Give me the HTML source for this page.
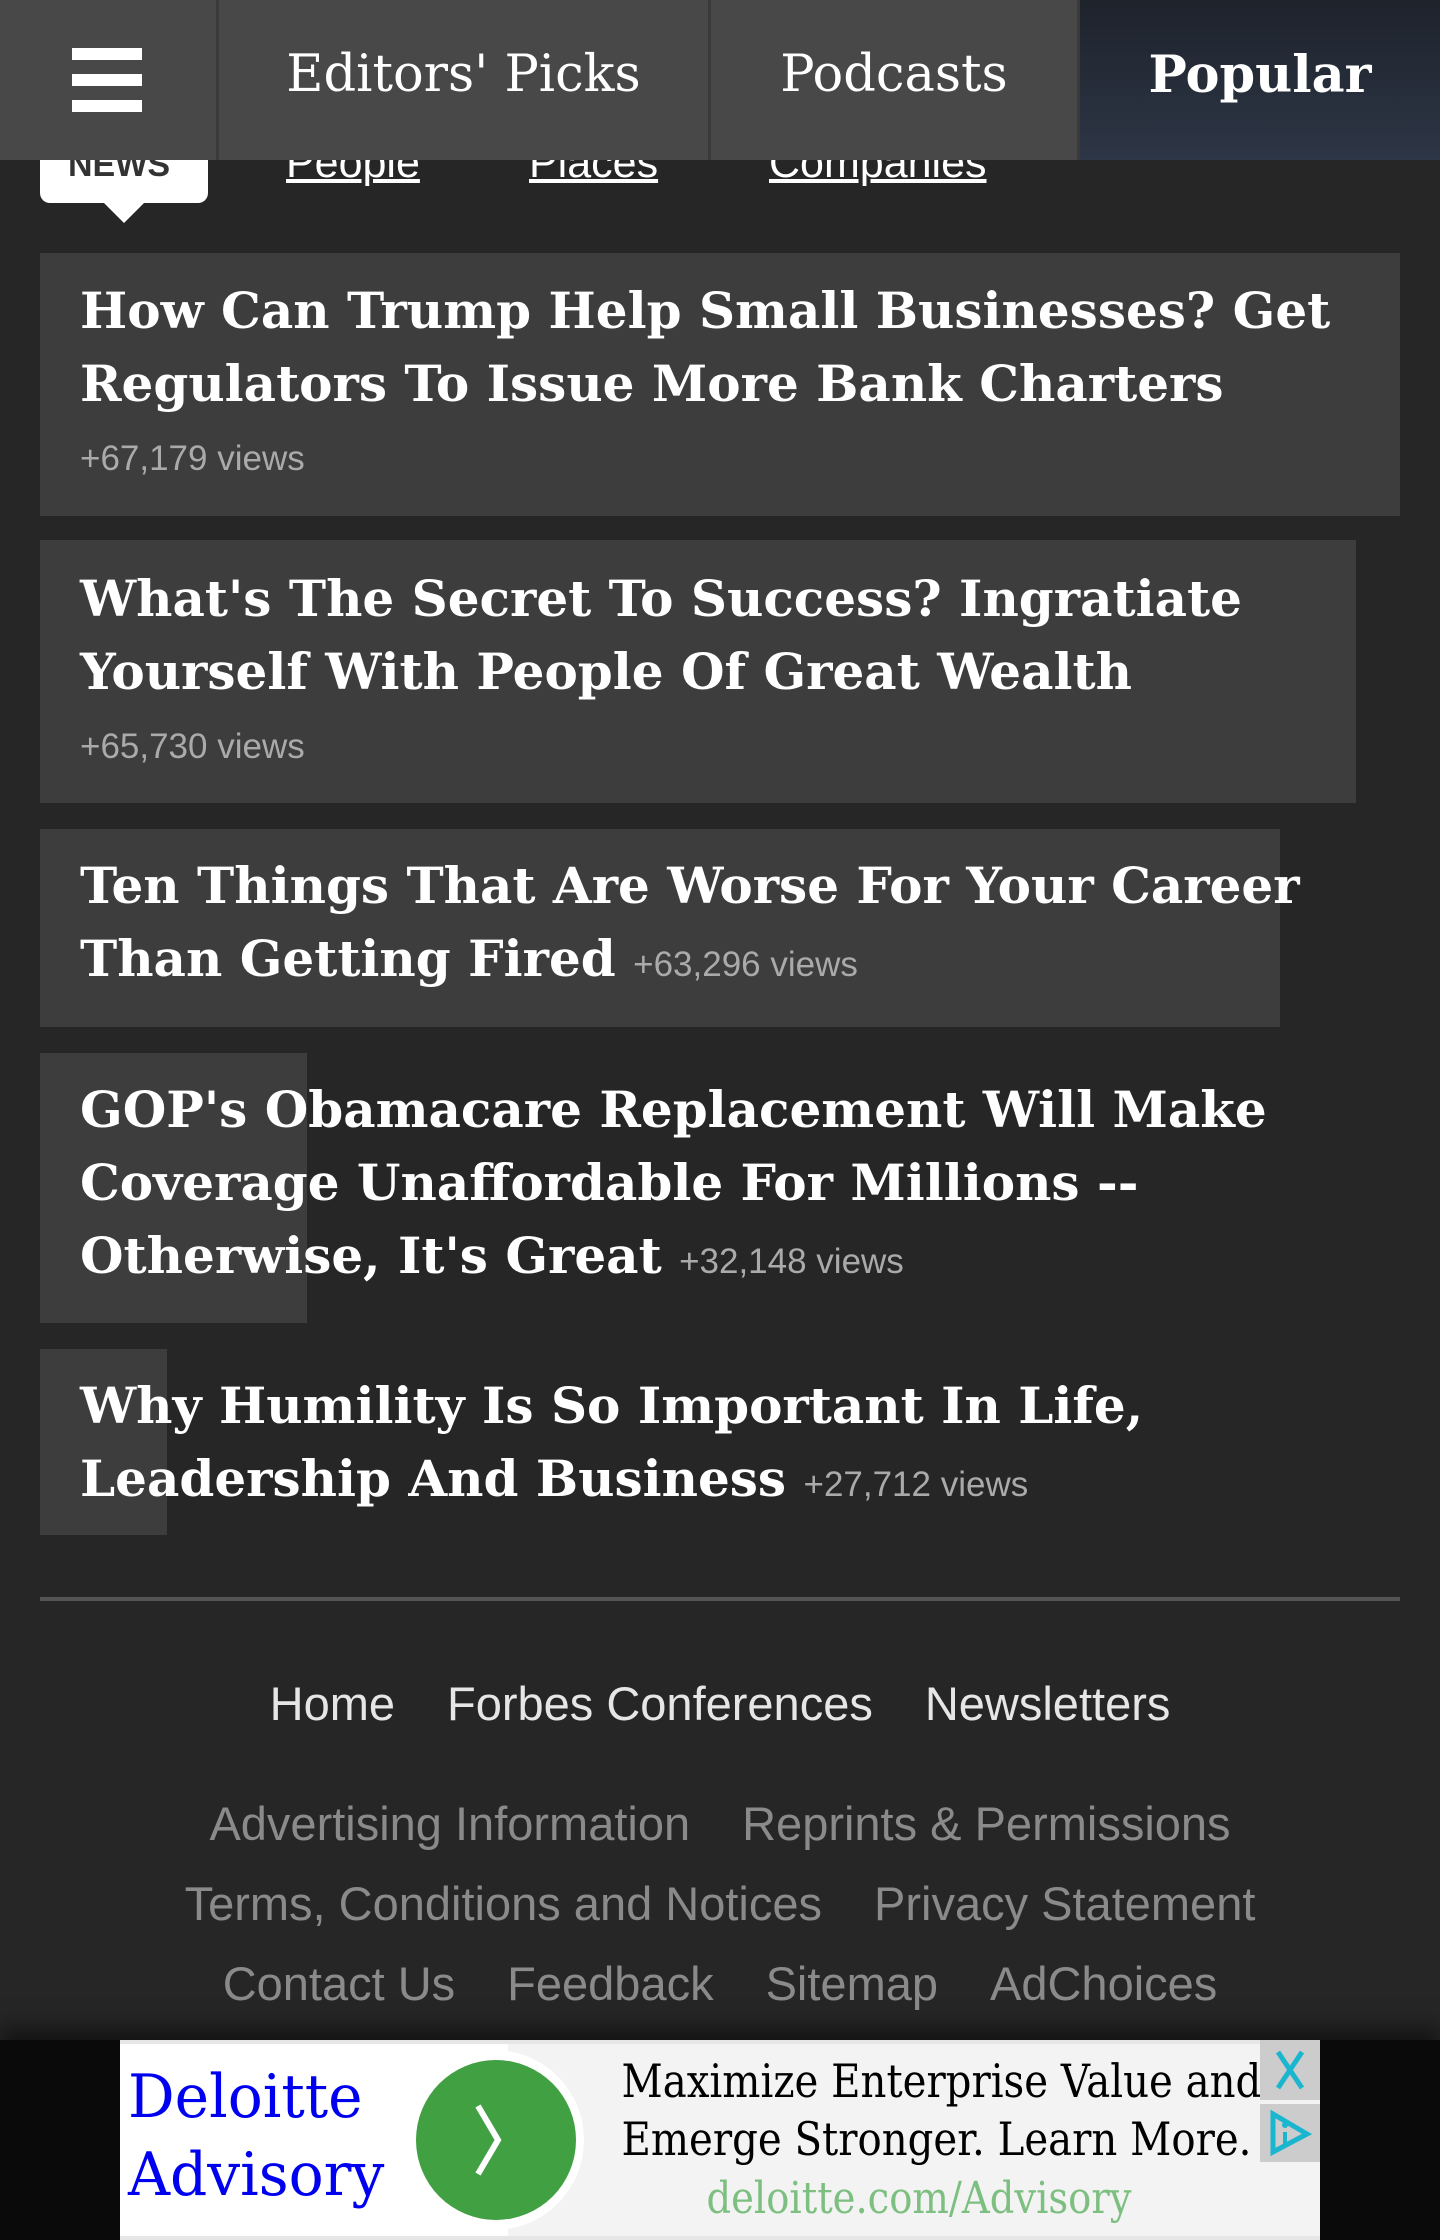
<!DOCTYPE html>
<html><head><meta charset="utf-8"><style>
*{margin:0;padding:0;box-sizing:border-box}
body{width:1440px;height:2240px;background:#262626;position:relative;overflow:hidden;font-family:"Liberation Sans",sans-serif}
.abs{position:absolute}
.nav{left:0;top:0;width:1440px;height:160px;background:#484848}
.cell{position:absolute;top:0;height:160px;color:#fff;font-family:"DejaVu Serif","Liberation Serif",serif;font-size:51px;line-height:150px;text-align:center;border-right:3px solid #3a3a3a;white-space:nowrap}
.sub a{position:absolute;top:138px;color:#fff;font-size:43px;text-decoration:underline;text-decoration-thickness:4px;line-height:50px}
.bg{position:absolute;background:#3d3d3d;left:40px}
.t{position:absolute;left:80px;color:#fff;font-family:"DejaVu Serif","Liberation Serif",serif;font-weight:bold;font-size:50px;line-height:73px;white-space:nowrap}
.v{font-family:"Liberation Sans",sans-serif;font-weight:normal;font-size:35px;color:#aaa;letter-spacing:0}
.fl{position:absolute;width:1440px;text-align:center;font-size:47px;white-space:nowrap}
.fl span{margin:0 26px}
</style></head><body>
<div class="abs nav"></div>
<div class="cell" style="left:0;width:219px">
 <div class="abs" style="left:72px;top:48px;width:70px;height:12px;background:#fff"></div>
 <div class="abs" style="left:72px;top:74px;width:70px;height:12px;background:#fff"></div>
 <div class="abs" style="left:72px;top:100px;width:70px;height:12px;background:#fff"></div>
</div>
<div class="cell" style="left:219px;width:492px">Editors' Picks</div>
<div class="cell" style="left:711px;width:369px">Podcasts</div>
<div class="cell" style="left:1080px;width:360px;border:none;font-weight:bold;background:linear-gradient(180deg,#1e232c,#2d3646)">Popular</div>

<div class="abs" style="left:40px;top:160px;width:168px;height:43px;background:#fff;border-radius:0 0 10px 10px"></div>
<div class="abs" style="left:104px;top:203px;width:0;height:0;border-left:20px solid transparent;border-right:20px solid transparent;border-top:20px solid #fff"></div>
<div class="abs" style="left:68px;top:140px;color:#333;font-weight:bold;font-size:34px;line-height:50px;clip-path:inset(20px 0 0 0)">NEWS</div>
<div class="sub" style="clip-path:inset(160px 0 0 0);position:absolute;left:0;top:0;width:1440px;height:220px">
<a style="left:286px">People</a><a style="left:529px">Places</a><a style="left:769px">Companies</a></div>

<div class="bg" style="top:253px;width:1360px;height:263px"></div>
<div class="t" style="top:274px">How Can Trump Help Small Businesses? Get<br>Regulators To Issue More Bank Charters</div>
<div class="t v" style="top:422px">+67,179 views</div>

<div class="bg" style="top:540px;width:1316px;height:263px"></div>
<div class="t" style="top:562px">What's The Secret To Success? Ingratiate<br>Yourself With People Of Great Wealth</div>
<div class="t v" style="top:710px">+65,730 views</div>

<div class="bg" style="top:829px;width:1240px;height:198px"></div>
<div class="t" style="top:849px">Ten Things That Are Worse For Your Career<br>Than Getting Fired <span class="v">+63,296 views</span></div>

<div class="bg" style="top:1053px;width:267px;height:270px"></div>
<div class="t" style="top:1073px">GOP's Obamacare Replacement Will Make<br>Coverage Unaffordable For Millions --<br>Otherwise, It's Great <span class="v">+32,148 views</span></div>

<div class="bg" style="top:1349px;width:127px;height:186px"></div>
<div class="t" style="top:1369px">Why Humility Is So Important In Life,<br>Leadership And Business <span class="v">+27,712 views</span></div>

<div class="abs" style="left:40px;top:1597px;width:1360px;height:4px;background:#555"></div>

<div class="fl" style="top:1676px;color:#e6e6e6"><span>Home</span><span>Forbes Conferences</span><span>Newsletters</span></div>
<div class="fl" style="top:1796px;color:#8a8a8a"><span>Advertising Information</span><span>Reprints &amp; Permissions</span></div>
<div class="fl" style="top:1876px;color:#8a8a8a"><span>Terms, Conditions and Notices</span><span>Privacy Statement</span></div>
<div class="fl" style="top:1956px;color:#8a8a8a"><span>Contact Us</span><span>Feedback</span><span>Sitemap</span><span>AdChoices</span></div>

<div class="abs" style="left:0;top:2040px;width:1440px;height:200px;background:#0a0a0a;box-shadow:0 -12px 20px rgba(0,0,0,.5)"></div>
<div class="abs" style="left:120px;top:2040px;width:1200px;height:200px;background:#e6e6e6"></div>
<div class="abs" style="left:120px;top:2044px;width:1200px;height:192px;background:#f3f3f3"></div>
<div class="abs" style="left:120px;top:2044px;width:388px;height:192px;background:#fff"></div>
<div class="abs" style="left:404px;top:2050px;width:180px;height:180px;border-radius:50%;background:#fff"></div>
<div class="abs" style="left:416px;top:2060px;width:160px;height:160px;border-radius:50%;background:#41a041"></div>
<svg class="abs" style="left:470px;top:2100px" width="50" height="80"><path d="M8 6 L28 40 L8 74" stroke="#fff" stroke-width="6" fill="none"/></svg>
<div class="abs" style="left:128px;top:2058px;color:#0000f0;font-family:'DejaVu Serif','Liberation Serif',serif;font-size:60px;line-height:78px;transform:scaleX(0.97);transform-origin:left">Deloitte<br>Advisory</div>
<div class="abs" style="left:579px;top:2052px;width:680px;text-align:center;color:#000;font-family:'DejaVu Serif','Liberation Serif',serif;font-size:46px;line-height:58px;white-space:nowrap;transform:scaleX(0.875)">Maximize Enterprise Value and<br>Emerge Stronger. Learn More.<br><span style="color:#7dbf80;font-size:44px">deloitte.com/Advisory</span></div>
<div class="abs" style="left:1260px;top:2040px;width:60px;height:60px;background:#ccc"></div>
<svg class="abs" style="left:1268px;top:2048px" width="44" height="44"><path d="M10 4 L34 40 M34 4 L10 40" stroke="#1ab6d0" stroke-width="5"/></svg>
<div class="abs" style="left:1260px;top:2104px;width:60px;height:58px;background:#ccc"></div>
<svg class="abs" style="left:1265px;top:2108px" width="50" height="50"><path d="M8 6 L8 44 L42 26 Z" stroke="#1ab6d0" stroke-width="5" fill="none"/><path d="M20 24 v14" stroke="#1ab6d0" stroke-width="4"/><circle cx="20" cy="17" r="3" fill="#1ab6d0"/></svg>
</body></html>
